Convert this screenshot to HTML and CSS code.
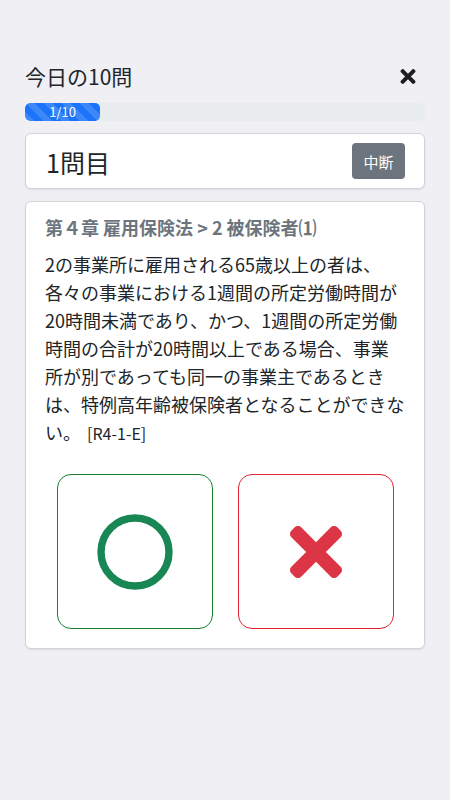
FILE: index.html
```html
<!DOCTYPE html>
<html lang="ja">
<head>
<meta charset="utf-8">
<title>今日の10問</title>
<link rel="stylesheet" href="styles.css">
</head>
<body>
<div class="page">
  <div class="topbar">
    <h1 class="title">今日の10問</h1>
    <svg class="close" viewBox="0 80 352 352" aria-label="閉じる"><path d="M242.72 256l100.07-100.07c12.28-12.28 12.28-32.19 0-44.48l-22.24-22.24c-12.28-12.28-32.19-12.28-44.48 0L176 189.28 75.93 89.21c-12.28-12.28-32.19-12.28-44.48 0L9.21 111.45c-12.28 12.28-12.28 32.19 0 44.48L109.28 256 9.21 356.07c-12.28 12.28-12.28 32.19 0 44.48l22.24 22.24c12.28 12.28 32.2 12.28 44.48 0L176 322.72l100.07 100.07c12.28 12.28 32.2 12.28 44.48 0l22.24-22.24c12.28-12.28 12.28-32.19 0-44.48L242.72 256z"/></svg>
  </div>
  <div class="progress">
    <div class="progress-bar" style="width: 75px;">1/10</div>
  </div>
  <div class="card qhead">
    <div class="qnum">1問目</div>
    <button class="btn-stop">中断</button>
  </div>
  <div class="card qbody">
    <div class="chapter">第４章 雇用保険法 &gt; 2 被保険者⑴</div>
    <p class="question">2の事業所に雇用される65歳以上の者は、各々の事業における1週間の所定労働時間が20時間未満であり、かつ、1週間の所定労働時間の合計が20時間以上である場合、事業所が別であっても同一の事業主であるときは、特例高年齢被保険者となることができない。<span class="ref">[R4-1-E]</span></p>
    <div class="answers">
      <button class="ans ans-ok" aria-label="正しい">
        <svg class="icon-o" viewBox="0 0 76 76"><circle cx="38" cy="38" r="34" fill="none" stroke-width="7.4"/></svg>
      </button>
      <button class="ans ans-ng" aria-label="誤り">
        <svg class="icon-x" viewBox="0 80 352 352"><path d="M242.72 256l100.07-100.07c12.28-12.28 12.28-32.19 0-44.48l-22.24-22.24c-12.28-12.28-32.19-12.28-44.48 0L176 189.28 75.93 89.21c-12.28-12.28-32.19-12.28-44.48 0L9.21 111.45c-12.28 12.28-12.28 32.19 0 44.48L109.28 256 9.21 356.07c-12.28 12.28-12.28 32.19 0 44.48l22.24 22.24c12.28 12.28 32.2 12.28 44.48 0L176 322.72l100.07 100.07c12.28 12.28 32.2 12.28 44.48 0l22.24-22.24c12.28-12.28 12.28-32.19 0-44.48L242.72 256z"/></svg>
      </button>
    </div>
  </div>
</div>
</body>
</html>
```

FILE: styles.css
```css
* { box-sizing: border-box; }
html, body { margin: 0; padding: 0; }
body {
  background: #efeff4;
  font-family: "Noto Sans CJK JP", "Noto Sans", sans-serif;
  color: #212529;
  width: 450px;
  height: 800px;
}
.page {
  padding: 61px 25px 0 25px;
}
.topbar {
  display: flex;
  align-items: center;
  justify-content: space-between;
  height: 30px;
}
.title {
  margin: 0;
  font-size: 21px;
  font-weight: 400;
  line-height: 30px;
}
.close {
  width: 16px;
  height: 15px;
  fill: #1d1d1f;
  margin-right: 9px;
}
.progress {
  margin-top: 12px;
  height: 18px;
  background: #e9ecef;
  border-radius: 5px;
  overflow: hidden;
  display: flex;
}
.progress-bar {
  height: 100%;
  background-color: #1a73f8;
  background-image: linear-gradient(45deg, rgba(255,255,255,.15) 25%, transparent 25%, transparent 50%, rgba(255,255,255,.15) 50%, rgba(255,255,255,.15) 75%, transparent 75%, transparent);
  background-size: 18px 18px;
  color: #fff;
  font-size: 13px;
  line-height: 18px;
  text-align: center;
  border-radius: 5px;
}
.card {
  background: #fff;
  border: 1px solid #d3d3d6;
  border-radius: 6px;
  box-shadow: 0 1px 2px rgba(0,0,0,.08);
}
.qhead {
  margin-top: 12px;
  height: 56px;
  display: flex;
  align-items: center;
  justify-content: space-between;
  padding: 0 19px 0 20px;
}
.qnum {
  font-size: 25px;
  line-height: 34px;
  padding-top: 1px;
}
.btn-stop {
  width: 53px;
  height: 36px;
  border: none;
  border-radius: 4px;
  background: #6c757d;
  color: #fff;
  font-family: inherit;
  font-size: 15px;
  padding: 0;
}
.qbody {
  margin-top: 12px;
  padding: 13px 19px 19px 19px;
}
.chapter {
  font-size: 18px;
  font-weight: 700;
  color: #6c757d;
  line-height: 24px;
}
.question {
  margin: 11px 0 0 0;
  font-size: 18px;
  line-height: 28px;
}
.ref {
  font-size: 16px;
  line-height: 1;
  margin-left: 6px;
}
.answers {
  margin-top: 28px;
  display: flex;
  justify-content: center;
  gap: 25px;
}
.ans {
  width: 156px;
  height: 155px;
  background: #fff;
  border-radius: 14px;
  display: flex;
  align-items: center;
  justify-content: center;
  padding: 0;
}
.ans-ok { border: 1px solid #198030; }
.ans-ng { border: 1px solid #e4222f; }
.icon-o {
  width: 76px;
  height: 76px;
  stroke: #198754;
}
.icon-x {
  width: 54px;
  height: 52px;
  fill: #dc3545;
}
```
